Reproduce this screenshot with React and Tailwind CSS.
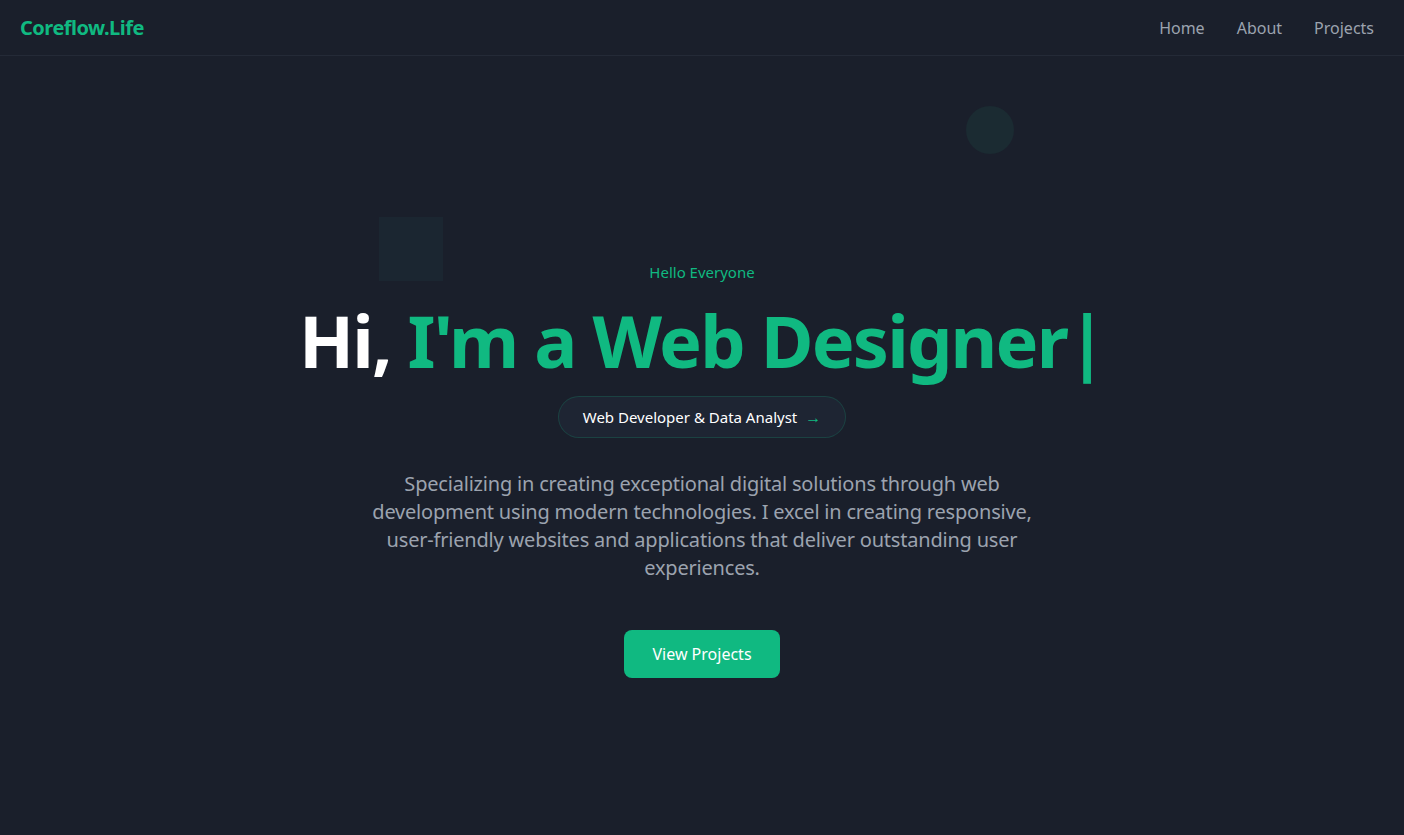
import { useState } from "react";

export default function App() {
  const [active] = useState("Home");

  return (
    <div className="min-h-screen w-full bg-[#1a1f2b] font-['Noto_Sans',sans-serif] relative overflow-hidden">
      {/* Header */}
      <header className="h-14 flex items-center justify-between px-5 border-b border-[#242a37]">
        <span className="text-xl font-bold tracking-tight text-[#10b981]">Coreflow.Life</span>
        <nav className="flex items-center gap-8 pr-2.5 text-base text-[#9ca3af]">
          <a href="#" className={active === "Home" ? "text-[#9ca3af]" : ""}>Home</a>
          <a href="#">About</a>
          <a href="#">Projects</a>
        </nav>
      </header>

      {/* Floating shapes */}
      <div className="absolute left-[379px] top-[217px] w-16 h-16 bg-[#1b2631]"></div>
      <div className="absolute left-[966px] top-[106px] w-12 h-12 rounded-full bg-[#1b2b32]"></div>

      {/* Hero */}
      <main className="relative flex flex-col items-center text-center pt-[204px] pb-24">
        <p className="text-[15px] leading-6 text-[#10b981]">Hello Everyone</p>
        <h1 className="mt-5 text-7xl leading-[72px] font-bold tracking-tight text-white">
          Hi, <span className="text-[#10b981]">I'm a Web Designer|</span>
        </h1>
        <div className="mt-5 px-6 py-2 flex items-center rounded-full bg-[#1e2533] border border-[#10b981]/20 text-[15px] leading-6 text-white">
          <span>Web Developer &amp; Data Analyst</span>
          <span className="ml-2 text-base leading-6 text-[#10b981]">→</span>
        </div>
        <p className="mt-8 max-w-[690px] text-xl leading-7 tracking-[-0.01em] text-[#9ca3af]">
          Specializing in creating exceptional digital solutions through web development using modern technologies. I excel in creating responsive, user-friendly websites and applications that deliver outstanding user experiences.
        </p>
        <button className="mt-12 px-7 py-3 rounded-lg bg-[#10b981] text-white text-base leading-6">
          View Projects
        </button>
      </main>
    </div>
  );
}
